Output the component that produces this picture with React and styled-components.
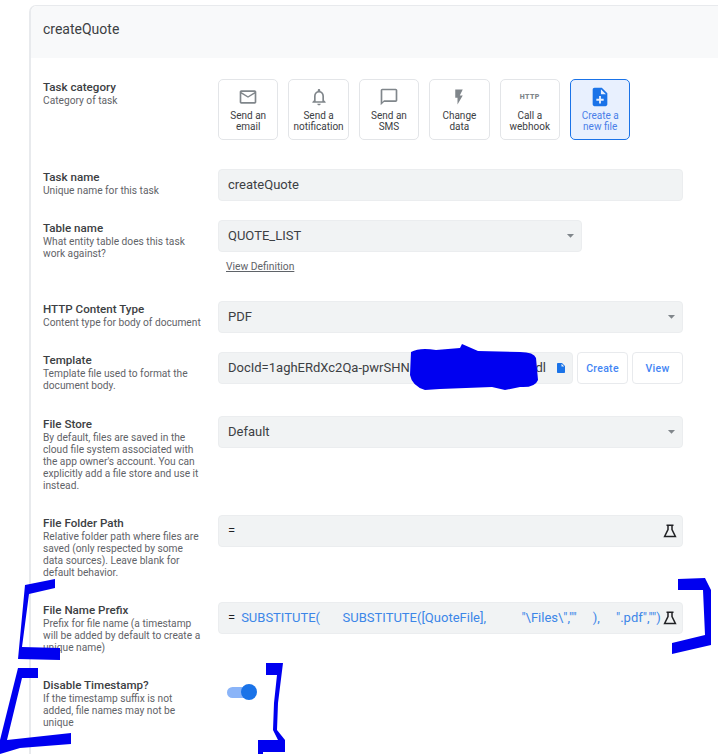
import React from 'react'
import styled, { createGlobalStyle } from 'styled-components'
import {
  MdMailOutline,
  MdNotificationsNone,
  MdChatBubbleOutline,
  MdFlashOn,
  MdNoteAdd,
  MdInsertDriveFile,
  MdArrowDropDown,
} from 'react-icons/md'

const GlobalStyle = createGlobalStyle`
  html, body {
    margin: 0;
    padding: 0;
    background: #fff;
    font-family: Roboto, "Liberation Sans", sans-serif;
    overflow: hidden;
  }
  #root {
    width: 718px;
    height: 754px;
    position: relative;
    overflow: hidden;
  }
`

const Card = styled.div`
  margin: 5px 0 0 29px;
  width: 720px;
  height: 760px;
  border-top: 1px solid #e8eaed;
  border-left: 2px solid #e8eaed;
  border-top-left-radius: 7px;
  box-sizing: border-box;
`

const Header = styled.div`
  height: 52px;
  box-sizing: border-box;
  background: #f8f9fa;
  display: flex;
  align-items: center;
  padding: 0 0 6px 12px;
  font-size: 14px;
  color: #3c4043;
  border-top-left-radius: 6px;
`

const Row = styled.div`
  display: grid;
  grid-template-columns: 175px 465px;
  padding-left: 12px;
  margin-top: ${props => props.$top}px;
`

const LabelBlock = styled.div`
  padding-top: 1px;
  width: 160px;
`

const Label = styled.div`
  font-size: 11.6px;
  line-height: 14px;
  margin-bottom: 1px;
  font-weight: 500;
  color: #3c4043;
`

const Description = styled.div`
  font-size: 10.2px;
  line-height: 12px;
  color: #5f6368;
`

const CategoryList = styled.div`
  display: flex;
  gap: 10px;
`

const CategoryButton = styled.div`
  width: 60.4px;
  height: 61px;
  box-sizing: border-box;
  border: 1px solid ${props => (props.$active ? '#1a73e8' : '#e3e5e8')};
  border-radius: 5px;
  background: ${props => (props.$active ? '#e8f0fe' : '#fff')};
  color: ${props => (props.$active ? '#4a7fe8' : '#3c4043')};
  display: flex;
  flex-direction: column;
  align-items: center;
  font-size: 10px;
  line-height: 11px;
  text-align: center;
`

const IconSlot = styled.div`
  height: 30px;
  display: flex;
  align-items: center;
  justify-content: center;
  padding-top: 4px;
  box-sizing: border-box;
  color: ${props => (props.$active ? '#1a73e8' : '#80868b')};
  font-size: ${props => props.$size || 20}px;
`

const HttpBadge = styled.span`
  font-size: 7px;
  font-weight: 900;
  letter-spacing: 0.4px;
  color: #80868b;
`

const Field = styled.div`
  height: 32px;
  width: ${props => props.$width || 465}px;
  box-sizing: border-box;
  background: #f1f3f4;
  border: 1px solid #ebedef;
  border-radius: 4px;
  display: flex;
  align-items: center;
  justify-content: space-between;
  padding: 0 5px 1px 9px;
  font-size: 13px;
  color: #3c4043;
  white-space: pre;
`

const Arrow = styled(MdArrowDropDown)`
  font-size: 17px;
  color: #80868b;
  margin-right: -3px;
`

const DefinitionLink = styled.a`
  display: block;
  margin: 8px 0 0 8px;
  font-size: 10.3px;
  line-height: 13px;
  color: #5f6368;
  text-decoration: underline;
`

const TemplateRow = styled.div`
  display: flex;
  gap: 4px;
`

const TemplateTail = styled.span`
  display: flex;
  align-items: center;
  gap: 9px;
  color: #1a73e8;
  font-size: 12px;
`

const TailText = styled.span`
  color: #3c4043;
  font-size: 13px;
`

const SmallButton = styled.div`
  width: 51px;
  height: 32px;
  box-sizing: border-box;
  border: 1px solid #e8eaed;
  border-radius: 4px;
  display: flex;
  align-items: center;
  justify-content: center;
  font-size: 10.5px;
  font-weight: 500;
  letter-spacing: 0.3px;
  color: #4285f4;
`

const FormulaText = styled.span`
  color: #3c86e8;
  font-size: 13px;
`

const Equals = styled.span`
  color: #202124;
  margin-right: 6px;
`

const FormulaWrap = styled.span`
  display: flex;
  align-items: center;
  min-width: 0;
`

const Toggle = styled.div`
  position: relative;
  width: 27px;
  height: 11px;
  margin: 10px 0 0 9px;
  background: #8ab4f8;
  border-radius: 6px;
`

const Thumb = styled.div`
  position: absolute;
  right: -3px;
  top: -3px;
  width: 16px;
  height: 16px;
  border-radius: 50%;
  background: #1a73e8;
`

const Scribbles = styled.svg`
  position: absolute;
  left: 0;
  top: 0;
  pointer-events: none;
`

const FlaskIcon = () => (
  <svg width="14" height="14" viewBox="0 0 14 14" fill="none" stroke="#202124" strokeWidth="1.5">
    <path d="M3.5 1.2h7M5 1.2v4.3L1.6 12.4h10.8L9 5.5V1.2" />
  </svg>
)

const categories = [
  { icon: <MdMailOutline />, text: ['Send an', 'email'] },
  { icon: <MdNotificationsNone />, text: ['Send a', 'notification'] },
  { icon: <MdChatBubbleOutline />, text: ['Send an', 'SMS'] },
  { icon: <MdFlashOn />, text: ['Change', 'data'], size: 18 },
  { icon: <HttpBadge>HTTP</HttpBadge>, text: ['Call a', 'webhook'] },
  { icon: <MdNoteAdd />, text: ['Create a', 'new file'], active: true, size: 22 },
]

const FieldLabel = ({ title, children }) => (
  <LabelBlock>
    <Label>{title}</Label>
    <Description>{children}</Description>
  </LabelBlock>
)

export default function App() {
  return (
    <>
      <GlobalStyle />
      <Card>
        <Header>createQuote</Header>
        <Row $top={21}>
          <FieldLabel title="Task category">Category of task</FieldLabel>
          <CategoryList>
            {categories.map(cat => (
              <CategoryButton key={cat.text[1]} $active={cat.active}>
                <IconSlot $active={cat.active} $size={cat.size}>{cat.icon}</IconSlot>
                <div>{cat.text[0]}<br />{cat.text[1]}</div>
              </CategoryButton>
            ))}
          </CategoryList>
        </Row>
        <Row $top={29}>
          <FieldLabel title="Task name">Unique name for this task</FieldLabel>
          <Field>createQuote</Field>
        </Row>
        <Row $top={19}>
          <FieldLabel title="Table name">What entity table does this task work against?</FieldLabel>
          <div>
            <Field $width={364}>QUOTE_LIST<Arrow /></Field>
            <DefinitionLink>View Definition</DefinitionLink>
          </div>
        </Row>
        <Row $top={28}>
          <FieldLabel title="HTTP Content Type">Content type for body of document</FieldLabel>
          <Field>PDF<Arrow /></Field>
        </Row>
        <Row $top={19}>
          <FieldLabel title="Template">Template file used to format the document body.</FieldLabel>
          <TemplateRow>
            <Field $width={355}>
              DocId=1aghERdXc2Qa-pwrSHN
              <TemplateTail><TailText>dl</TailText><MdInsertDriveFile /></TemplateTail>
            </Field>
            <SmallButton>Create</SmallButton>
            <SmallButton>View</SmallButton>
          </TemplateRow>
        </Row>
        <Row $top={24}>
          <FieldLabel title="File Store">
            By default, files are saved in the cloud file system associated with the app owner's account. You can explicitly add a file store and use it instead.
          </FieldLabel>
          <Field>Default<Arrow /></Field>
        </Row>
        <Row $top={23}>
          <FieldLabel title="File Folder Path">
            Relative folder path where files are saved (only respected by some data sources). Leave blank for default behavior.
          </FieldLabel>
          <Field><Equals>=</Equals><FlaskIcon /></Field>
        </Row>
        <Row $top={23}>
          <FieldLabel title="File Name Prefix">
            Prefix for file name (a timestamp will be added by default to create a unique name)
          </FieldLabel>
          <Field>
            <FormulaWrap>
              <Equals>=</Equals>
              <FormulaText>{'SUBSTITUTE(       SUBSTITUTE([QuoteFile],           "\\Files\\",""     ),     ".pdf","")'}</FormulaText>
            </FormulaWrap>
            <FlaskIcon />
          </Field>
        </Row>
        <Row $top={23}>
          <FieldLabel title="Disable Timestamp?">
            If the timestamp suffix is not added, file names may not be unique
          </FieldLabel>
          <div><Toggle><Thumb /></Toggle></div>
        </Row>
      </Card>
      <Scribbles width="718" height="754" viewBox="0 0 718 754" fill="#0000f0">
        <path d="M411 352 Q420 347 436 350 L460 348 L462 344 L478 351 L520 352 Q534 352 536 358 L538 380 Q535 388 520 387 L505 390 L492 387 L440 389 L425 390 Q412 386 410 375 Z" />
        <path d="M25 585 L55 579 L55 588 L29 594 L22 647 L60 648 L60 660 L18 659 Z" />
        <path d="M18 668 L38 668 L38 678 L22 678 L7 740 L71 733 L71 744 L20 748 L0 754 L0 740 Z" />
        <path d="M266 663 L283 663 L278 703 L277 730 L285 740 L285 752 L263 752 L263 754 L258 754 L258 740 L278 740 L273 730 L274 703 L277 675 L266 675 Z" />
        <path d="M678 579 L705 578 L711 590 L711 645 L672 654 L672 643 L705 635 L703 590 L678 590 Z" />
      </Scribbles>
    </>
  )
}
